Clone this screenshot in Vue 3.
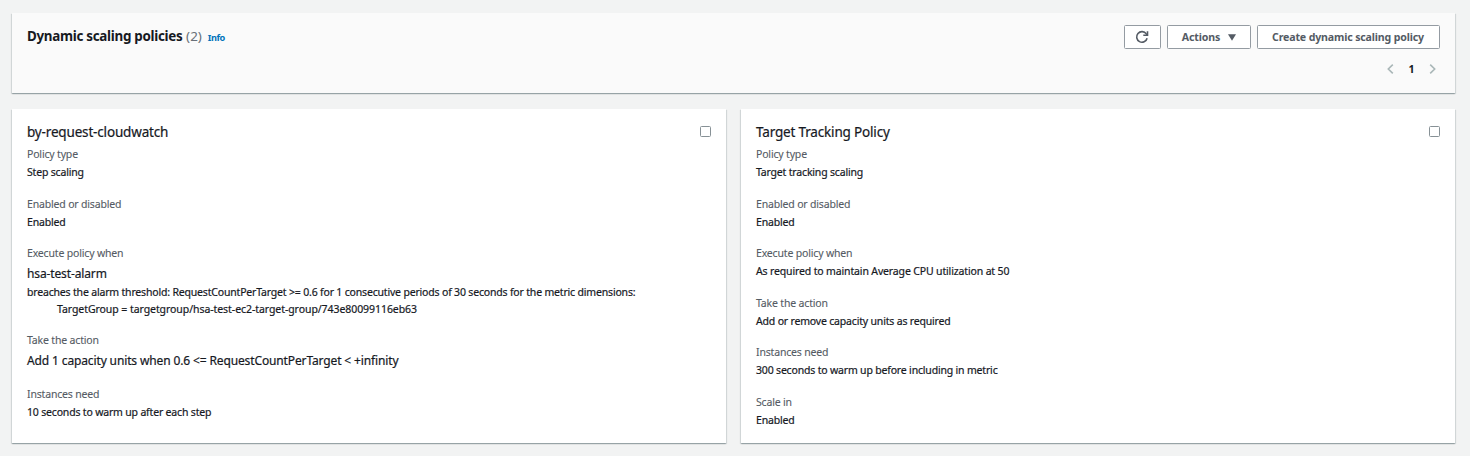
<script setup>
const policies = [
  {
    name: 'by-request-cloudwatch',
    fields: [
      { label: 'Policy type', lines: [{ text: 'Step scaling' }] },
      { label: 'Enabled or disabled', lines: [{ text: 'Enabled' }] },
      {
        label: 'Execute policy when',
        lines: [
          { text: 'hsa-test-alarm', kind: 'large' },
          { text: 'breaches the alarm threshold: RequestCountPerTarget >= 0.6 for 1 consecutive periods of 30 seconds for the metric dimensions:' },
          { text: 'TargetGroup = targetgroup/hsa-test-ec2-target-group/743e80099116eb63', kind: 'indent' },
        ],
      },
      { label: 'Take the action', lines: [{ text: 'Add 1 capacity units when 0.6 <= RequestCountPerTarget < +infinity', kind: 'large' }] },
      { label: 'Instances need', lines: [{ text: '10 seconds to warm up after each step' }] },
    ],
  },
  {
    name: 'Target Tracking Policy',
    fields: [
      { label: 'Policy type', lines: [{ text: 'Target tracking scaling' }] },
      { label: 'Enabled or disabled', lines: [{ text: 'Enabled' }] },
      { label: 'Execute policy when', lines: [{ text: 'As required to maintain Average CPU utilization at 50', kind: 'wide' }] },
      { label: 'Take the action', lines: [{ text: 'Add or remove capacity units as required' }] },
      { label: 'Instances need', lines: [{ text: '300 seconds to warm up before including in metric' }] },
      { label: 'Scale in', lines: [{ text: 'Enabled' }] },
    ],
  },
]
</script>

<template>
  <main class="page">
    <header class="panel head">
      <div class="bar">
        <h2 class="title">Dynamic scaling policies <span class="count">(2)</span><a class="info">Info</a></h2>
        <div class="actions">
          <button class="btn refresh" aria-label="Refresh">
            <svg width="14" height="14" viewBox="0 0 14 14" fill="none" stroke="#545b64" stroke-width="1.6">
              <path d="M12.1 8.2A5.3 5.3 0 1 1 11.3 3.9L12.2 5.1" />
              <path d="M12.5 1.2V5.3H8.3" />
            </svg>
          </button>
          <button class="btn menu">Actions
            <svg width="8" height="7" viewBox="0 0 8 7"><path d="M0 0.3H8L4 6.8Z" fill="#545b64" /></svg>
          </button>
          <button class="btn create">Create dynamic scaling policy</button>
        </div>
      </div>
      <nav class="pages">
        <svg width="7" height="10" viewBox="0 0 7 10" fill="none" stroke="#aab7b8" stroke-width="1.6"><path d="M5.8 0.6L1.3 5L5.8 9.4" /></svg>
        <span class="current">1</span>
        <svg width="7" height="10" viewBox="0 0 7 10" fill="none" stroke="#aab7b8" stroke-width="1.6"><path d="M1.2 0.6L5.7 5L1.2 9.4" /></svg>
      </nav>
    </header>
    <div class="cards">
      <section v-for="p in policies" :key="p.name" class="panel card">
        <div class="cardhead">
          <h3 class="name">{{ p.name }}</h3>
          <span class="check" role="checkbox" aria-checked="false"></span>
        </div>
        <dl class="fields">
          <div v-for="f in p.fields" :key="f.label">
            <dt class="label">{{ f.label }}</dt>
            <dd v-for="l in f.lines" :key="l.text" class="value" :class="l.kind">{{ l.text }}</dd>
          </div>
        </dl>
      </section>
    </div>
  </main>
</template>

<style>
body { background: #f2f3f3; }
</style>

<style scoped>
.page {
  box-sizing: border-box;
  height: 456px;
  padding: 13px 15px 13px 12px;
  display: flex;
  flex-direction: column;
  gap: 16px;
  background: #f2f3f3;
  color: #16191f;
  font-family: "Noto Sans", sans-serif;
  overflow: hidden;
}
.panel {
  box-sizing: border-box;
  background: #fff;
  box-shadow: 0 1px 1px 0 rgba(0, 28, 36, 0.22), 1px 1px 1px 0 rgba(0, 28, 36, 0.1), -1px 1px 1px 0 rgba(0, 28, 36, 0.1);
}
.head { height: 80px; padding: 12px 15px 0; background: #fafafa; }
.bar { display: flex; justify-content: space-between; }
.title { margin: 2px 0 0; font-size: 13.4px; line-height: 18px; font-weight: 700; letter-spacing: -0.29px; }
.count { margin-left: 0.5px; font-weight: 400; color: #687078; letter-spacing: 0; }
.info { margin-left: 6px; font-size: 9.2px; color: #0073bb; letter-spacing: -0.45px; }
.actions { display: flex; gap: 6px; }
.btn {
  box-sizing: border-box;
  height: 24px;
  margin: 0;
  padding: 0;
  display: flex;
  align-items: center;
  justify-content: center;
  border: 1px solid #949ba2;
  border-radius: 1.5px;
  background: #fff;
  color: #545b64;
  font: 700 10.6px/16px "Noto Sans", sans-serif;
  letter-spacing: -0.15px;
}
.refresh { width: 37px; padding-right: 1px; }
.menu { width: 84px; gap: 8px; }
.create { width: 183px; padding-right: 1px; }
.pages { margin-top: 12px; padding-right: 4px; display: flex; justify-content: flex-end; align-items: center; height: 16px; }
.current { width: 35px; text-align: center; font-size: 10.5px; line-height: 16px; font-weight: 700; }
.cards { flex: 1; display: grid; grid-template-columns: 1fr 1fr; gap: 15px; }
.card { padding: 13px 15px 0; height: 334px; }
.cardhead { height: 24px; display: flex; justify-content: space-between; align-items: flex-start; }
.name { margin: 0; font-size: 13.5px; line-height: 20px; font-weight: 400; letter-spacing: -0.17px; -webkit-text-stroke: 0.2px; }
.check { box-sizing: border-box; width: 11px; height: 11px; margin-top: 4px; border: 1px solid #879196; border-radius: 1.5px; }
.fields { margin: 0; display: flex; flex-direction: column; gap: 14.5px; }
.label { padding-bottom: 1px; font-size: 10.5px; line-height: 17px; color: #545b64; letter-spacing: -0.17px; -webkit-text-stroke: 0.1px; }
.value { margin: 0; font-size: 10.5px; line-height: 16.5px; letter-spacing: -0.18px; white-space: nowrap; -webkit-text-stroke: 0.2px; }
.value:last-child { padding-bottom: 0.5px; }
.large { font-size: 12px; line-height: 21px; letter-spacing: -0.13px; }
.indent { padding-left: 30px; letter-spacing: -0.065px; }
.wide { letter-spacing: -0.145px; }
</style>
